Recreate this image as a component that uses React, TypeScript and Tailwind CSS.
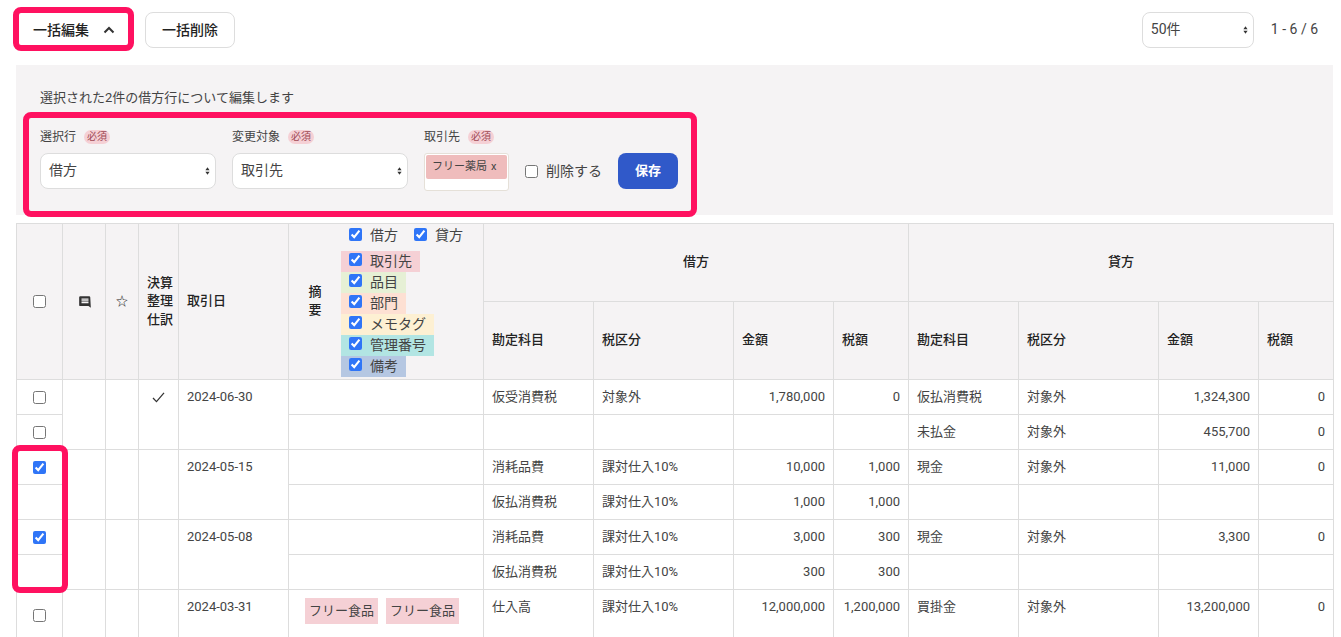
const font = '[font-family:Roboto,"Noto_Sans_CJK_JP",sans-serif]';

type Row = {
	check: "off" | "on" | "none";
	settle?: boolean;
	date?: string;
	span?: boolean;
	cells: string[];
};

const rows: Row[] = [
	{ check: "off", settle: true, date: "2024-06-30", span: true, cells: ["仮受消費税", "対象外", "1,780,000", "0", "仮払消費税", "対象外", "1,324,300", "0"] },
	{ check: "off", cells: ["", "", "", "", "未払金", "対象外", "455,700", "0"] },
	{ check: "on", date: "2024-05-15", span: true, cells: ["消耗品費", "課対仕入10%", "10,000", "1,000", "現金", "対象外", "11,000", "0"] },
	{ check: "none", cells: ["仮払消費税", "課対仕入10%", "1,000", "1,000", "", "", "", ""] },
	{ check: "on", date: "2024-05-08", span: true, cells: ["消耗品費", "課対仕入10%", "3,000", "300", "現金", "対象外", "3,300", "0"] },
	{ check: "none", cells: ["仮払消費税", "課対仕入10%", "300", "300", "", "", "", ""] },
];

const filters = [
	{ label: "取引先", bg: "bg-[#f5d0d5]", w: "w-[79px]" },
	{ label: "品目", bg: "bg-[#e6f0d5]", w: "w-[65px]" },
	{ label: "部門", bg: "bg-[#fde0d3]", w: "w-[65px]" },
	{ label: "メモタグ", bg: "bg-[#fdf0d3]", w: "w-[93px]" },
	{ label: "管理番号", bg: "bg-[#b2e5e3]", w: "w-[93px]" },
	{ label: "備考", bg: "bg-[#b5c7e2]", w: "w-[65px]" },
];

const border = "border border-[#dddddd]";

function Arrows() {
	return (
		<svg viewBox="0 0 6 10" className="pointer-events-none absolute right-[5px] top-1/2 h-[10px] w-[5px] -translate-y-1/2" fill="#333333">
			<path d="M3 0.5 5.5 4H0.5z" />
			<path d="M3 9.5 0.5 6h5z" />
		</svg>
	);
}

function Select({ value, className }: { value: string; className: string }) {
	return (
		<div className={`relative flex h-9 items-center rounded-lg border border-[#dddddd] bg-white pb-[2px] pl-2 text-[14px] text-[#444444] ${className}`}>
			{value}
			<Arrows />
		</div>
	);
}

function Required() {
	return (
		<span className="ml-2 flex h-[14px] w-[26px] items-center justify-center rounded-full bg-[#f5d0d5] text-[10px] text-[#a04a55]">
			必須
		</span>
	);
}

function Field({ label, children }: { label: string; children: React.ReactNode }) {
	return (
		<div className="flex flex-col">
			<div className="mb-[9px] flex h-[15px] items-center text-[12px] text-[#444444]">
				{label}
				<Required />
			</div>
			{children}
		</div>
	);
}

function Check({ on, className = "" }: { on?: boolean; className?: string }) {
	return <input type="checkbox" defaultChecked={on} className={`m-0 block h-[13px] w-[13px] accent-[#2f75f7] ${className}`} />;
}

function Highlight({ className }: { className: string }) {
	return <div className={`pointer-events-none absolute rounded-[8px] border-[6px] border-[#ff1160] ${className}`} />;
}

export default function App() {
	return (
		<div className={`relative h-[637px] w-[1341px] overflow-hidden bg-white pl-4 pr-2 text-[#444444] ${font}`}>
			<div className="flex h-[65px] items-start pt-3">
				<button className="ml-[3px] flex h-9 w-[110px] items-center justify-center gap-[14px] rounded-lg bg-white text-[14px] font-medium text-[#222222]">
					一括編集
					<svg viewBox="0 0 12 8" className="h-2 w-3" fill="none" stroke="#333333" strokeWidth="2">
						<path d="M1.5 6.5 6 2l4.5 4.5" />
					</svg>
				</button>
				<button className="ml-4 h-9 w-[90px] rounded-lg border border-[#dddddd] bg-white text-[14px] font-medium text-[#222222]">
					一括削除
				</button>
				<Select value="50件" className="ml-auto w-[112px]" />
				<span className="ml-[17px] mr-[15px] mt-[9px] text-[14px] leading-4">1 - 6 / 6</span>
			</div>

			<div className="h-[150px] bg-[#f5f3f4] pl-6 pt-6">
				<p className="h-[18px] text-[13px] leading-[18px]">選択された2件の借方行について編集します</p>
				<div className="mt-[22px] flex items-start">
					<Field label="選択行">
						<Select value="借方" className="w-[176px]" />
					</Field>
					<div className="ml-4">
						<Field label="変更対象">
							<Select value="取引先" className="w-[176px]" />
						</Field>
					</div>
					<div className="ml-4">
						<Field label="取引先">
							<div className="h-[38px] w-[85px] rounded-[3px] border border-[#e5e0d8] bg-white p-[1px]">
								<div className="flex h-[24px] items-center gap-1 rounded-[2px] bg-[#efbcbc] pl-[6px] text-[11px] text-[#444444]">
									フリー薬局 <span>x</span>
								</div>
							</div>
						</Field>
					</div>
					<label className="ml-4 mt-[24px] flex h-9 items-center gap-2 text-[14px]">
						<Check />
						削除する
					</label>
					<button className="ml-4 mt-[24px] h-9 w-[60px] rounded-lg bg-[#3059c9] text-[13px] font-bold text-white">保存</button>
				</div>
			</div>

			<table className="mt-2 w-[1317px] table-fixed border-collapse text-[13px]">
				<colgroup>
					<col className="w-[46px]" />
					<col className="w-[43px]" />
					<col className="w-[33px]" />
					<col className="w-[40px]" />
					<col className="w-[110px]" />
					<col className="w-[195px]" />
					<col className="w-[110px]" />
					<col className="w-[140px]" />
					<col className="w-[100px]" />
					<col className="w-[75px]" />
					<col className="w-[110px]" />
					<col className="w-[140px]" />
					<col className="w-[100px]" />
					<col className="w-[75px]" />
				</colgroup>
				<thead className="bg-[#f5f3f4] text-[#222222]">
					<tr className="h-[78px]">
						<th rowSpan={2} className={border}>
							<div className="flex justify-center">
								<Check />
							</div>
						</th>
						<th rowSpan={2} className={border}>
							<div className="flex justify-center pl-[1px]">
								<svg viewBox="0 0 24 24" className="h-[14px] w-[14px]" fill="#333333">
									<path d="M21 4a2 2 0 0 0-2-2H4a2 2 0 0 0-2 2v13a2 2 0 0 0 2 2h14l4 3zM18 14H6v-2h12zm0-3H6V9h12zm0-3H6V6h12z" />
								</svg>
							</div>
						</th>
						<th rowSpan={2} className={`${border} text-[12px] font-normal`}>☆</th>
						<th rowSpan={2} className={`${border} whitespace-nowrap pl-2 text-left font-medium leading-[18.5px]`}>
							決算<br />整理<br />仕訳
						</th>
						<th rowSpan={2} className={`${border} px-2 pb-[2px] text-left font-medium`}>取引日</th>
						<th rowSpan={2} className={`${border} p-0 font-normal`}>
							<div className="flex items-center">
								<div className="w-[52px] pb-[2px] text-center font-medium leading-[18px]">
									摘<br />要
								</div>
								<div className="flex flex-col text-left text-[14px] leading-[21px] text-[#444444]">
									<div className="-mt-[1px] mb-[5px] flex pl-2">
										<label className="flex w-[65px] items-center gap-2">
											<Check on className="-mt-[2px]" />
											借方
										</label>
										<label className="flex items-center gap-2">
											<Check on className="-mt-[2px]" />
											貸方
										</label>
									</div>
									{filters.map((f) => (
										<label key={f.label} className={`flex h-[21px] items-center gap-2 whitespace-nowrap pl-2 ${f.bg} ${f.w}`}>
											<Check on className="-mt-[4px]" />
											{f.label}
										</label>
									))}
								</div>
							</div>
						</th>
						<th colSpan={4} className={`${border} pb-[2px] font-medium`}>借方</th>
						<th colSpan={4} className={`${border} pb-[2px] font-medium`}>貸方</th>
					</tr>
					<tr className="h-[78px] text-left">
						{["勘定科目", "税区分", "金額", "税額", "勘定科目", "税区分", "金額", "税額"].map((h, i) => (
							<th key={i} className={`${border} px-2 pb-[2px] font-medium`}>{h}</th>
						))}
					</tr>
				</thead>
				<tbody>
					{rows.map((row, i) => (
						<tr key={i} className="h-[35px]">
							<td className={`${border} align-middle`}>
								{row.check !== "none" && (
									<div className="flex justify-center">
										<Check on={row.check === "on"} />
									</div>
								)}
							</td>
							{row.span && (
								<>
									<td rowSpan={2} className={border} />
									<td rowSpan={2} className={border} />
									<td rowSpan={2} className={`${border} align-top`}>
										{row.settle && (
											<svg viewBox="0 0 14 12" className="mx-auto mt-[12px] h-[11px] w-[13px]" fill="none" stroke="#333333" strokeWidth="1.4">
												<path d="M1 6.5 4.8 10.5 13 1" />
											</svg>
										)}
									</td>
									<td rowSpan={2} className={`${border} px-2 pt-[8px] align-top leading-[18px]`}>
										{row.date}
									</td>
								</>
							)}
							<td className={border} />
							{row.cells.map((c, j) => (
								<td key={j} className={`${border} px-2 leading-[18px] ${j % 4 >= 2 ? "text-right" : ""}`}>
									{c}
								</td>
							))}
						</tr>
					))}
					<tr className="h-[52px]">
						<td className={`${border} align-middle`}>
							<div className="flex justify-center">
								<Check />
							</div>
						</td>
						<td className={border} />
						<td className={border} />
						<td className={border} />
						<td className={`${border} px-2 pt-[8px] align-top leading-[18px]`}>2024-03-31</td>
						<td className={`${border} pl-4 pt-2 align-top`}>
							<div className="flex gap-2">
								{["フリー食品", "フリー食品"].map((t, i) => (
									<span key={i} className="flex h-[26px] w-[73px] items-center justify-center bg-[#f5d0d5]">{t}</span>
								))}
							</div>
						</td>
						{["仕入高", "課対仕入10%", "12,000,000", "1,200,000", "買掛金", "対象外", "13,200,000", "0"].map((c, j) => (
							<td key={j} className={`${border} px-2 pt-2 align-top leading-[18px] ${j % 4 >= 2 ? "text-right" : ""}`}>
								{c}
							</td>
						))}
					</tr>
				</tbody>
			</table>

			<Highlight className="left-[13px] top-[7px] h-[44px] w-[121px]" />
			<Highlight className="left-[23px] top-[112px] h-[105px] w-[674px]" />
			<Highlight className="left-[12px] top-[445px] h-[148px] w-[56px]" />
		</div>
	);
}
